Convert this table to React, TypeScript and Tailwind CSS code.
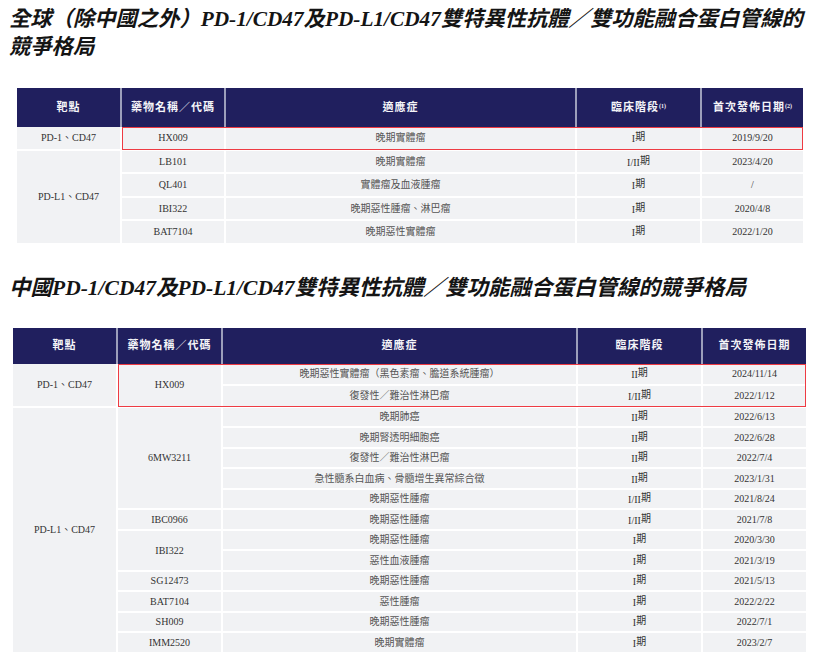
import type { ReactNode } from 'react';
import clsx from 'clsx';

interface Row {
  ind: string;
  stage: string;
  date: string;
}

interface Drug {
  name: string;
  rows: Row[];
  mark?: boolean;
}

interface Group {
  target: string;
  drugs: Drug[];
}

interface Layout {
  cols: string[];
  head: string;
  row: string;
  markRow: string;
}

const globalGroups: Group[] = [
  {
    target: 'PD-1、CD47',
    drugs: [{ name: 'HX009', mark: true, rows: [{ ind: '晚期實體瘤', stage: 'I期', date: '2019/9/20' }] }],
  },
  {
    target: 'PD-L1、CD47',
    drugs: [
      { name: 'LB101', rows: [{ ind: '晚期實體瘤', stage: 'I/II期', date: '2023/4/20' }] },
      { name: 'QL401', rows: [{ ind: '實體瘤及血液腫瘤', stage: 'I期', date: '/' }] },
      { name: 'IBI322', rows: [{ ind: '晚期惡性腫瘤、淋巴瘤', stage: 'I期', date: '2020/4/8' }] },
      { name: 'BAT7104', rows: [{ ind: '晚期惡性實體瘤', stage: 'I期', date: '2022/1/20' }] },
    ],
  },
];

const chinaGroups: Group[] = [
  {
    target: 'PD-1、CD47',
    drugs: [
      {
        name: 'HX009',
        mark: true,
        rows: [
          { ind: '晚期惡性實體瘤（黑色素瘤、膽道系統腫瘤）', stage: 'II期', date: '2024/11/14' },
          { ind: '復發性／難治性淋巴瘤', stage: 'I/II期', date: '2022/1/12' },
        ],
      },
    ],
  },
  {
    target: 'PD-L1、CD47',
    drugs: [
      {
        name: '6MW3211',
        rows: [
          { ind: '晚期肺癌', stage: 'II期', date: '2022/6/13' },
          { ind: '晚期腎透明細胞癌', stage: 'II期', date: '2022/6/28' },
          { ind: '復發性／難治性淋巴瘤', stage: 'II期', date: '2022/7/4' },
          { ind: '急性髓系白血病、骨髓增生異常綜合徵', stage: 'II期', date: '2023/1/31' },
          { ind: '晚期惡性腫瘤', stage: 'I/II期', date: '2021/8/24' },
        ],
      },
      { name: 'IBC0966', rows: [{ ind: '晚期惡性腫瘤', stage: 'I/II期', date: '2021/7/8' }] },
      {
        name: 'IBI322',
        rows: [
          { ind: '晚期惡性腫瘤', stage: 'I期', date: '2020/3/30' },
          { ind: '惡性血液腫瘤', stage: 'I期', date: '2021/3/19' },
        ],
      },
      { name: 'SG12473', rows: [{ ind: '晚期惡性腫瘤', stage: 'I期', date: '2021/5/13' }] },
      { name: 'BAT7104', rows: [{ ind: '惡性腫瘤', stage: 'I期', date: '2022/2/22' }] },
      { name: 'SH009', rows: [{ ind: '晚期惡性腫瘤', stage: 'I期', date: '2022/7/1' }] },
      { name: 'IMM2520', rows: [{ ind: '晚期實體瘤', stage: 'I期', date: '2023/2/7' }] },
    ],
  },
];

function Cell({ w, h, className, children }: { w: string; h?: string; className?: string; children: ReactNode }) {
  return (
    <div className={clsx('flex shrink-0 items-center justify-center bg-[#f1f2f4] text-[10px] text-[#333]', w, h, className)}>
      {children}
    </div>
  );
}

function Stage({ value }: { value: string }) {
  const roman = value.replace('期', '');
  return (
    <span>
      {roman}
      <span className="align-[2px]">期</span>
    </span>
  );
}

function PipelineTable({ groups, headers, layout }: { groups: Group[]; headers: ReactNode[]; layout: Layout }) {
  const { cols } = layout;
  return (
    <div className="w-fit">
      {/* Header */}
      <div className={clsx('flex gap-[2px] bg-[#9c9eba]', layout.head)}>
        {headers.map((h, i) => (
          <div
            key={i}
            className={clsx(
              'flex shrink-0 items-center justify-center bg-[#201f5e] text-[11px] font-bold tracking-[1px] text-[#f4f4f8]',
              cols[i]
            )}
          >
            {h}
          </div>
        ))}
      </div>

      {/* Body */}
      <div className="flex flex-col gap-[2px] bg-white">
        {groups.map((g) => (
          <div key={g.target} className="flex gap-[2px]">
            <Cell w={cols[0]}>{g.target}</Cell>
            <div className="flex flex-col gap-[2px]">
              {g.drugs.map((d) => (
                <div key={d.name} className="relative flex gap-[2px]">
                  <Cell w={cols[1]}>{d.name}</Cell>
                  <div className="flex flex-col gap-[2px]">
                    {d.rows.map((r, i) => (
                      <div key={i} className="flex gap-[2px]">
                        <Cell w={cols[2]} h={d.mark ? layout.markRow : layout.row} className="text-[#555]">
                          {r.ind}
                        </Cell>
                        <Cell w={cols[3]} h={d.mark ? layout.markRow : layout.row}>
                          <Stage value={r.stage} />
                        </Cell>
                        <Cell w={cols[4]} h={d.mark ? layout.markRow : layout.row}>
                          {r.date}
                        </Cell>
                      </div>
                    ))}
                  </div>
                  {d.mark && (
                    <div className="pointer-events-none absolute inset-x-0 top-0 -bottom-[1px] border-[1.5px] border-[#ee3b43]" />
                  )}
                </div>
              ))}
            </div>
          </div>
        ))}
      </div>
    </div>
  );
}

export default function App() {
  return (
    <div className="h-[657px] w-[821px] overflow-hidden bg-white font-['Liberation_Serif','Noto_Sans_CJK_TC',serif]">
      <h1 className="pl-[9px] pt-[5px] text-[21.3px] font-bold italic leading-[28px] text-[#141414]">
        全球（除中國之外）PD-1/CD47及PD-L1/CD47雙特異性抗體／雙功能融合蛋白管線的
        <br />
        競爭格局
      </h1>

      <div className="ml-[17px] mt-[27px]">
        <PipelineTable
          groups={globalGroups}
          layout={{
            cols: ['w-[103px]', 'w-[102px]', 'w-[349px]', 'w-[123px]', 'w-[101px]'],
            head: 'h-[39px]',
            row: 'h-[21.5px]',
            markRow: 'h-[21.5px]',
          }}
          headers={[
            '靶點',
            '藥物名稱／代碼',
            '適應症',
            <span key="s">
              臨床階段<sup className="text-[6px] tracking-normal">(1)</sup>
            </span>,
            <span key="d">
              首次發佈日期<sup className="text-[6px] tracking-normal">(2)</sup>
            </span>,
          ]}
        />
      </div>

      <h2 className="mt-[30px] pl-[9px] text-[21.5px] font-bold italic leading-[30px] text-[#141414]">
        中國PD-1/CD47及PD-L1/CD47雙特異性抗體／雙功能融合蛋白管線的競爭格局
      </h2>

      <div className="ml-[13px] mt-[25px]">
        <PipelineTable
          groups={chinaGroups}
          layout={{
            cols: ['w-[103px]', 'w-[103px]', 'w-[353px]', 'w-[123px]', 'w-[103px]'],
            head: 'h-[36px]',
            row: 'h-[18.5px]',
            markRow: 'h-[20px]',
          }}
          headers={['靶點', '藥物名稱／代碼', '適應症', '臨床階段', '首次發佈日期']}
        />
      </div>
    </div>
  );
}
